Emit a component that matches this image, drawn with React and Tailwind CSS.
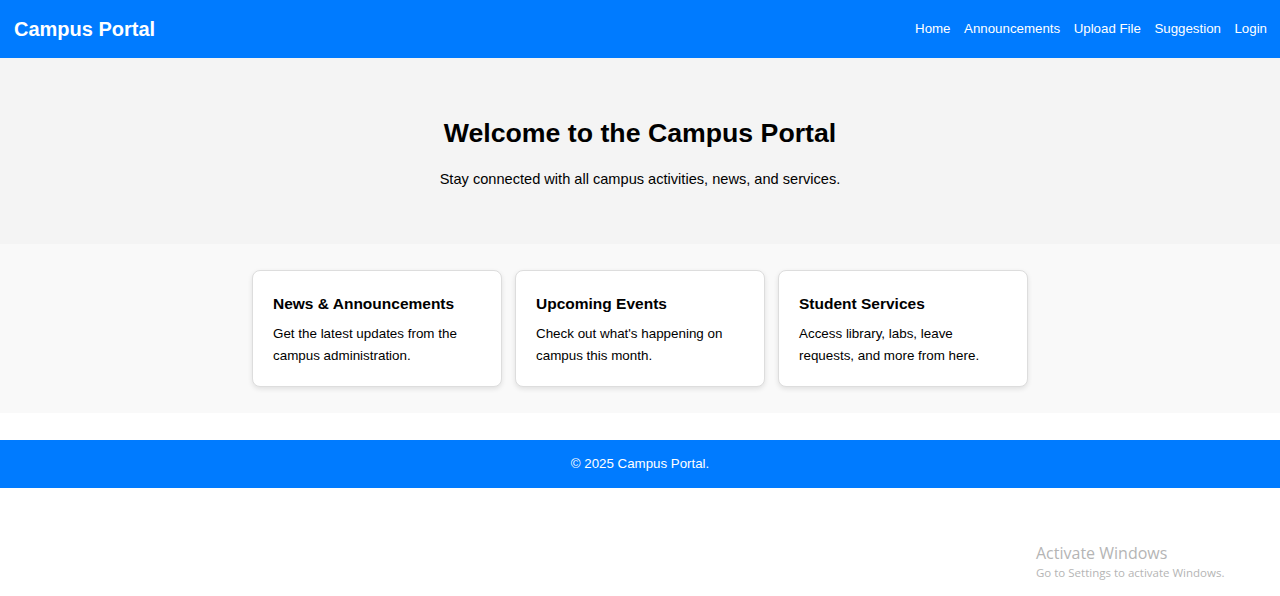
export default function App() {
  const cards = [
    { t: "News & Announcements", d: "Get the latest updates from the campus administration." },
    { t: "Upcoming Events", d: "Check out what's happening on campus this month." },
    { t: "Student Services", d: "Access library, labs, leave requests, and more from here." },
  ];
  return (
    <div className="relative min-h-[596px] bg-white text-black" style={{ fontFamily: '"Liberation Sans", Arial, sans-serif' }}>
      <header className="h-[58px] bg-[#007bff] flex items-center justify-between pl-[14px] pr-[13px] text-white">
        <div className="text-[20px] font-bold">Campus Portal</div>
        <nav className="flex gap-[13.5px] text-[13.3px]">
          <span>Home</span>
          <span>Announcements</span>
          <span>Upload File</span>
          <span>Suggestion</span>
          <span>Login</span>
        </nav>
      </header>
      <section className="h-[186px] bg-[#f4f4f4] flex flex-col items-center pt-[60px]">
        <h2 className="text-[26.7px] font-bold leading-[30px]">Welcome to the Campus Portal</h2>
        <p className="text-[14.6px] leading-[17px] mt-[23px]">Stay connected with all campus activities, news, and services.</p>
      </section>
      <section className="bg-[#f9f9f9] py-[26px] flex justify-center gap-[13px]">
        {cards.map((c) => (
          <div key={c.t} className="w-[250px] h-[117px] bg-white border border-[#dddddd] rounded-[8px] shadow-[0_2px_5px_rgba(0,0,0,0.1)] pt-[24px] px-[20px]">
            <h3 className="text-[15.5px] font-bold leading-[17px]">{c.t}</h3>
            <p className="text-[13.4px] leading-[22px] mt-[11px]">{c.d}</p>
          </div>
        ))}
      </section>
      <footer className="mt-[27px] h-[48px] bg-[#007bff] text-white flex items-center justify-center text-[13.3px]">
        © 2025 Campus Portal.
      </footer>
      <div className="absolute left-[1036px] top-[543px] text-[#b5b5b5]" style={{ fontFamily: '"Open Sans", "Noto Sans", sans-serif' }}>
        <div className="text-[16px] leading-[20px]">Activate Windows</div>
        <div className="text-[11.5px] leading-[15px] mt-[2px]">Go to Settings to activate Windows.</div>
      </div>
    </div>
  );
}
